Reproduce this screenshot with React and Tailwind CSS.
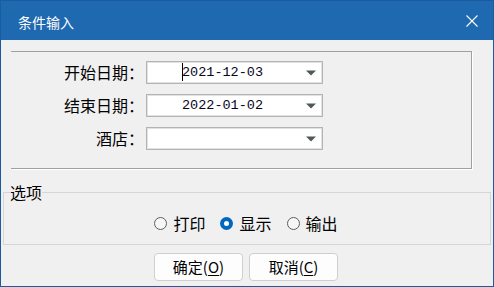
const cjk = "font-['Noto_Sans_CJK_SC','Microsoft_YaHei',sans-serif]"

function DateField({ value, cursor }) {
  return (
    <div className="ml-[2px] w-[177px] h-[23px] flex items-center bg-white border border-[#b4b4b4] shadow-[inset_0_0_0_1px_#e2e2e2]">
      <div className="flex-1 pr-[8px] text-center font-['Liberation_Mono',monospace] text-[13.5px] leading-[21px] text-[#050520]">
        {cursor && <span className="inline-block w-px h-[18px] -mr-px bg-black align-middle" />}
        {value}
      </div>
      <svg width="10" height="6" viewBox="0 0 10 6" className="mr-[6px]">
        <path d="M0 0.5H10L5 5.5Z" fill="#4f5a50" />
      </svg>
    </div>
  )
}

function Row({ label, value, cursor }) {
  return (
    <div className="flex items-center h-[23px]">
      <div className="w-[133px] text-right text-[16px] leading-[23px] text-black">{label}</div>
      <DateField value={value} cursor={cursor} />
    </div>
  )
}

function Radio({ label, checked }) {
  return (
    <div className="flex items-center gap-[6px]">
      {checked ? (
        <span className="w-[13px] h-[13px] rounded-full bg-[#0067c0] flex items-center justify-center">
          <span className="w-[5px] h-[5px] rounded-full bg-white" />
        </span>
      ) : (
        <span className="w-[13px] h-[13px] rounded-full border border-[#5e5e5e] bg-[#f6f6f6]" />
      )}
      <span className="text-[16px] leading-[20px] text-black">{label}</span>
    </div>
  )
}

function Button({ text, hotkey }) {
  return (
    <button className="w-[89px] h-[28px] rounded-[4px] border border-[#cfcfcf] bg-[#fdfdfd] text-[15px] leading-[20px] text-black flex items-center justify-center">
      {text}(<span className="underline underline-offset-2">{hotkey}</span>)
    </button>
  )
}

export default function App() {
  return (
    <div className={`w-[494px] h-[287px] flex flex-col bg-[#f0f0f0] border border-[#1a5c9e] ${cjk}`}>
      <div className="h-[39px] bg-[#1f69b0] flex items-center justify-between pl-[17px] pr-[15px] text-white">
        <span className="text-[14px] leading-[20px] pt-[3px]">条件输入</span>
        <svg width="12" height="12" viewBox="0 0 12 12">
          <path d="M0.5 0.5L11.5 11.5M11.5 0.5L0.5 11.5" stroke="#fff" strokeWidth="1.1" />
        </svg>
      </div>

      <div className="mt-[11px] ml-[10px] w-[461px] h-[118px] pt-[9px] flex flex-col gap-[10px] border-t border-r border-b border-[#a0a0a0] shadow-[1px_1px_0_#ffffff]">
        <Row label="开始日期：" value="2021-12-03" cursor />
        <Row label="结束日期：" value="2022-01-02" />
        <Row label="酒店：" value="" />
      </div>

      <fieldset className="mt-[13px] mx-[2px] border border-[#d6d6d6]">
        <legend className="ml-[6px] text-[16px] leading-[20px] text-black">选项</legend>
        <div className="h-[42px] flex items-center justify-center gap-[15px] pr-[2px]">
          <Radio label="打印" />
          <Radio label="显示" checked />
          <Radio label="输出" />
        </div>
      </fieldset>

      <div className="mt-[8px] flex justify-center gap-[6px] pr-[2px]">
        <Button text="确定" hotkey="O" />
        <Button text="取消" hotkey="C" />
      </div>
    </div>
  )
}
